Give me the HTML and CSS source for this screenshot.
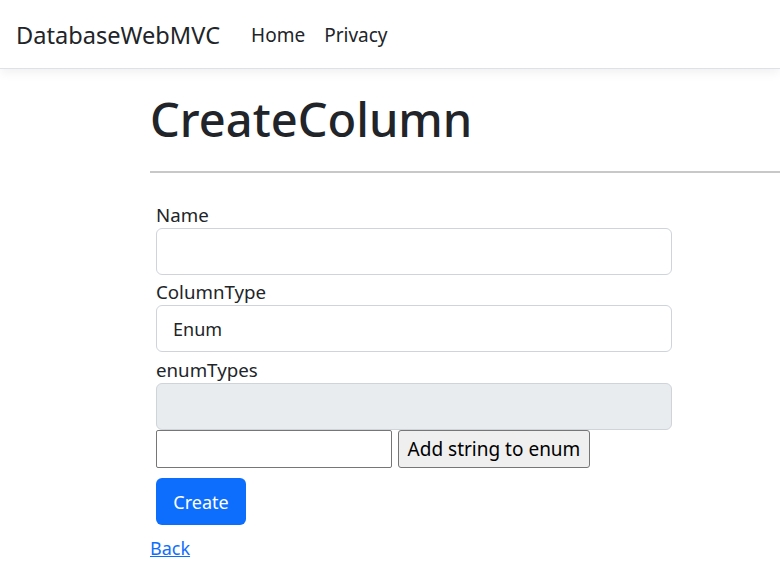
FILE: index.html
```html
<!DOCTYPE html>
<html lang="en">
<head>
<meta charset="utf-8">
<title>CreateColumn - DatabaseWebMVC</title>
<link rel="stylesheet" href="styles.css">
</head>
<body>
<header class="navbar">
  <a class="brand" href="#">DatabaseWebMVC</a>
  <nav class="nav-links">
    <a class="nav-link" href="#">Home</a>
    <a class="nav-link" href="#">Privacy</a>
  </nav>
</header>
<main class="container">
  <h1 class="title">CreateColumn</h1>
  <hr class="rule">
  <form class="form">
    <div class="group">
      <label class="label">Name</label>
      <input class="control first" type="text">
    </div>
    <div class="group">
      <label class="label">ColumnType</label>
      <div class="control select">Enum</div>
    </div>
    <div class="group">
      <label class="label">enumTypes</label>
      <div class="control disabled"></div>
    </div>
    <div class="add-row">
      <input class="plain-input" type="text">
      <button class="plain-btn" type="button">Add string to enum</button>
    </div>
    <button class="btn-primary" type="button">Create</button>
  </form>
  <a class="back" href="#">Back</a>
</main>
</body>
</html>
```
FILE: styles.css
```css
html, body {
  margin: 0;
  padding: 0;
  background: #fff;
}
body {
  font-family: "Noto Sans", "Open Sans", sans-serif;
  color: #212529;
  font-size: 18px;
}
.navbar {
  height: 69px;
  box-sizing: border-box;
  border-bottom: 1px solid #dee2e6;
  box-shadow: 0 4px 10px rgba(0,0,0,0.06);
  display: flex;
  align-items: center;
  padding-left: 16px;
  padding-top: 2px;
}
.brand {
  font-size: 23.6px;
  color: #212529;
  text-decoration: none;
  margin-right: 31px;
}
.nav-links {
  display: flex;
  gap: 19px;
}
.nav-link {
  color: #212529;
  text-decoration: none;
  font-size: 19px;
}
.container {
  padding-left: 150px;
}
.title {
  margin: 22px 0 0 0;
  font-size: 47px;
  font-weight: 500;
  line-height: 1.2;
}
.rule {
  margin: 24px 0 0 0;
  border: 0;
  border-top: 2px solid #c8c8c8;
}
.form {
  padding-left: 6px;
  width: 516px;
  margin-top: 28px;
}
.group {
  display: flex;
  flex-direction: column;
}
.label {
  font-size: 18.7px;
  line-height: 27px;
  margin-bottom: 0;
}
.control {
  box-sizing: border-box;
  width: 516px;
  height: 47px;
  border: 1px solid #ced4da;
  border-radius: 6px;
  font: inherit;
  font-size: 18px;
  padding: 0 16px;
  margin-bottom: 4px;
  background: #fff;
}
.first {
  margin-bottom: 3px;
}
.select {
  display: flex;
  align-items: center;
}
.disabled {
  background: #e9ecef;
  margin-bottom: 0;
}
.add-row {
  display: flex;
  gap: 6px;
  margin-top: 0;
}
.plain-input {
  box-sizing: border-box;
  width: 236px;
  height: 38px;
  border: 1px solid #767676;
  border-radius: 2px;
  font: inherit;
}
.plain-btn {
  box-sizing: border-box;
  height: 38px;
  width: 192px;
  border: 1px solid #767676;
  border-radius: 3px;
  background: #efefef;
  font: inherit;
  font-size: 19px;
  color: #000;
  padding: 0;
}
.btn-primary {
  margin-top: 10px;
  box-sizing: border-box;
  width: 90px;
  height: 47px;
  border: 0;
  border-radius: 6px;
  background: #0d6efd;
  color: #fff;
  font: inherit;
  font-size: 18px;
  padding: 0;
}
.back {
  display: inline-block;
  margin-top: 11px;
  color: #0d6efd;
  font-size: 18px;
}
```
